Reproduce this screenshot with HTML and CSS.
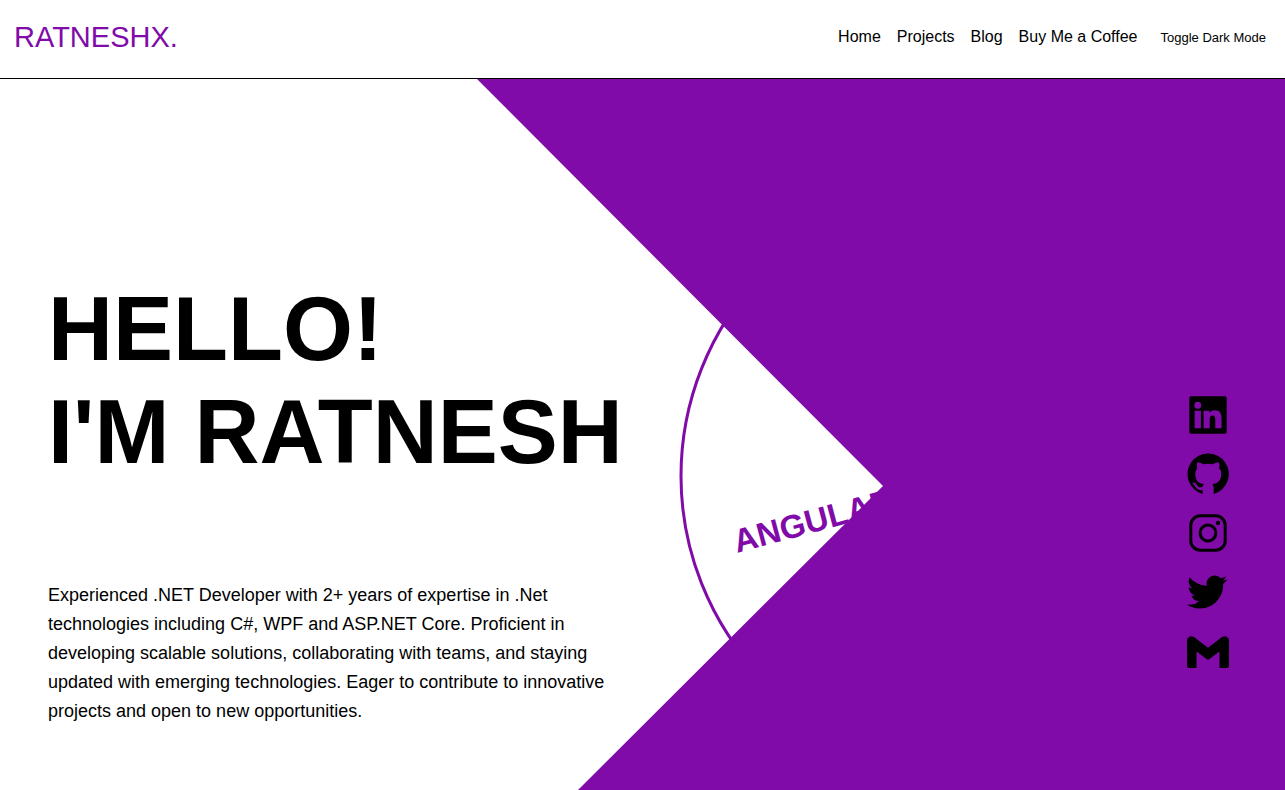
FILE: index.html
```html
<!DOCTYPE html>
<html lang="en">
<head>
  <meta charset="utf-8">
  <meta name="viewport" content="width=device-width, initial-scale=1">
  <title>RATNESHX.</title>
  <link rel="stylesheet" href="styles.css">
</head>
<body>
  <header class="site-header">
    <a class="logo" href="#">RATNESHX.</a>
    <nav class="nav">
      <a class="nav-link" href="#">Home</a>
      <a class="nav-link" href="#">Projects</a>
      <a class="nav-link" href="#">Blog</a>
      <a class="nav-link" href="#">Buy Me a Coffee</a>
      <button class="theme-toggle" type="button">Toggle Dark Mode</button>
    </nav>
  </header>
  <main class="hero">
    <svg class="backdrop" viewBox="0 0 1285 711" preserveAspectRatio="xMaxYMin slice" aria-hidden="true">
      <circle class="ring" cx="972" cy="397" r="291"/>
      <text class="skill" transform="translate(737 474) rotate(-15)">ANGULAR</text>
      <path class="wedge" d="M477 0H1285V711H578L883 407Z"/>
    </svg>
    <div class="intro">
      <h1 class="title">HELLO!<br>I'M RATNESH</h1>
      <p class="summary">Experienced .NET Developer with 2+ years of expertise in .Net technologies including C#, WPF and ASP.NET Core. Proficient in developing scalable solutions, collaborating with teams, and staying updated with emerging technologies. Eager to contribute to innovative projects and open to new opportunities.</p>
    </div>
    <div class="socials">
      <a class="social" href="#" aria-label="LinkedIn">
        <svg viewBox="0 0 42 42"><path fill-rule="evenodd" d="M4 2.300H38Q39.700 2.300 39.700 4V38Q39.700 39.700 38 39.700H4Q2.300 39.700 2.300 38V4Q2.300 2.300 4 2.300ZM10.800 7.700A3.500 3.500 0 1 0 10.800 14.700A3.500 3.500 0 1 0 10.800 7.700ZM7.600 16.700V34.300H13.900V16.700ZM16.600 16.700V34.300H22.700V25.500C22.700 23.100 23.300 21.400 25.500 21.400C27.700 21.400 28.300 23.100 28.300 25.500V34.300H34.600V24.500C34.600 19.200 32.700 16.200 27.900 16.200C25.300 16.200 23.500 17.400 22.600 19.100V16.700Z"/></svg>
      </a>
      <a class="social" href="#" aria-label="GitHub">
        <svg viewBox="0 0 126 126"><path d="M47 123V111C30 114 27 103 22 97C18 92 14 91 17 89C26 87 29 97 34 101Q39 105 47 101Q48 95 51 93C33 91 25 82 25 62Q25 52 31 45Q28 37 31 28Q40 28 49 34Q63 31 77 34Q88 28 96 28Q99 37 96 45Q103 52 103 62C103 82 93 91 76 93Q80 97 80 105V123A62 62 0 1 0 47 123Z"/></svg>
      </a>
      <a class="social" href="#" aria-label="Instagram">
        <svg viewBox="0 0 42 42"><g fill="none" stroke="currentColor" stroke-width="3"><rect x="3.800" y="3.800" width="34.400" height="34.400" rx="9.500"/><circle cx="21" cy="21" r="7.900"/></g><circle cx="31" cy="11" r="2.200"/></svg>
      </a>
      <a class="social" href="#" aria-label="Twitter">
        <svg viewBox="0 -0.500 25 25"><path d="M23.953 4.570a10 10 0 01-2.825.775 4.958 4.958 0 002.163-2.723c-.951.555-2.005.959-3.127 1.184a4.920 4.920 0 00-8.384 4.482C7.690 8.095 4.067 6.130 1.640 3.162a4.822 4.822 0 00-.666 2.475c0 1.710.87 3.213 2.188 4.096a4.904 4.904 0 01-2.228-.616v.06a4.923 4.923 0 003.946 4.827 4.996 4.996 0 01-2.212.085 4.936 4.936 0 004.604 3.417 9.867 9.867 0 01-6.102 2.105c-.39 0-.779-.023-1.170-.067a13.995 13.995 0 007.557 2.209c9.053 0 13.998-7.496 13.998-13.985 0-.21 0-.42-.015-.63A9.935 9.935 0 0024 4.590z"/></svg>
      </a>
      <a class="social" href="#" aria-label="Gmail">
        <svg viewBox="0 0 42 42"><path d="M0 10.500C0 6.800 4 4.900 7 7.100L21 17.700L35 7.100C38 4.900 42 6.800 42 10.500V35.500Q42 38 39.500 38H32.500V21.500L21 30L9.500 21.500V38H2.500Q0 38 0 35.500Z"/></svg>
      </a>
    </div>
  </main>
</body>
</html>
```
FILE: styles.css
```css
:root {
  --accent: #800ba8;
  --ink: #000;
}

* {
  box-sizing: border-box;
}

body {
  display: flex;
  flex-direction: column;
  min-height: 100vh;
  margin: 0;
  background: #fff;
  color: var(--ink);
  font-family: "Liberation Sans", Arial, sans-serif;
}

a {
  color: inherit;
  text-decoration: none;
}

.site-header {
  display: flex;
  justify-content: space-between;
  align-items: center;
  padding: 20px 19px 24px 14px;
  border-bottom: 1px solid var(--ink);
}

.logo {
  color: var(--accent);
  font-size: 29px;
  line-height: 34px;
}

.nav {
  display: flex;
  align-items: baseline;
  gap: 16px;
  font-size: 16px;
}

.theme-toggle {
  padding: 0 0 0 7px;
  border: 0;
  background: none;
  color: inherit;
  font: 13px "Liberation Sans", Arial, sans-serif;
  cursor: pointer;
}

.hero {
  position: relative;
  display: flex;
  flex: 1;
  justify-content: space-between;
  align-items: flex-end;
  padding: 64px 56px 64px 48px;
}

.backdrop {
  position: absolute;
  inset: 0;
  z-index: -1;
  width: 100%;
  height: 100%;
}

.ring {
  fill: none;
  stroke: var(--accent);
  stroke-width: 3px;
}

.skill {
  fill: var(--accent);
  font-size: 33px;
  font-weight: bold;
}

.wedge {
  fill: var(--accent);
}

.intro {
  display: grid;
  gap: 97px;
  max-width: 580px;
}

.title {
  margin: 0;
  font-size: 90px;
  line-height: 103px;
}

.summary {
  margin: 0;
  font-size: 18px;
  line-height: 29px;
}

.socials {
  display: grid;
  gap: 17px;
  padding-bottom: 54px;
}

.social {
  width: 42px;
  height: 42px;
}

.social svg {
  display: block;
  width: 100%;
  height: 100%;
  fill: currentColor;
}
```
